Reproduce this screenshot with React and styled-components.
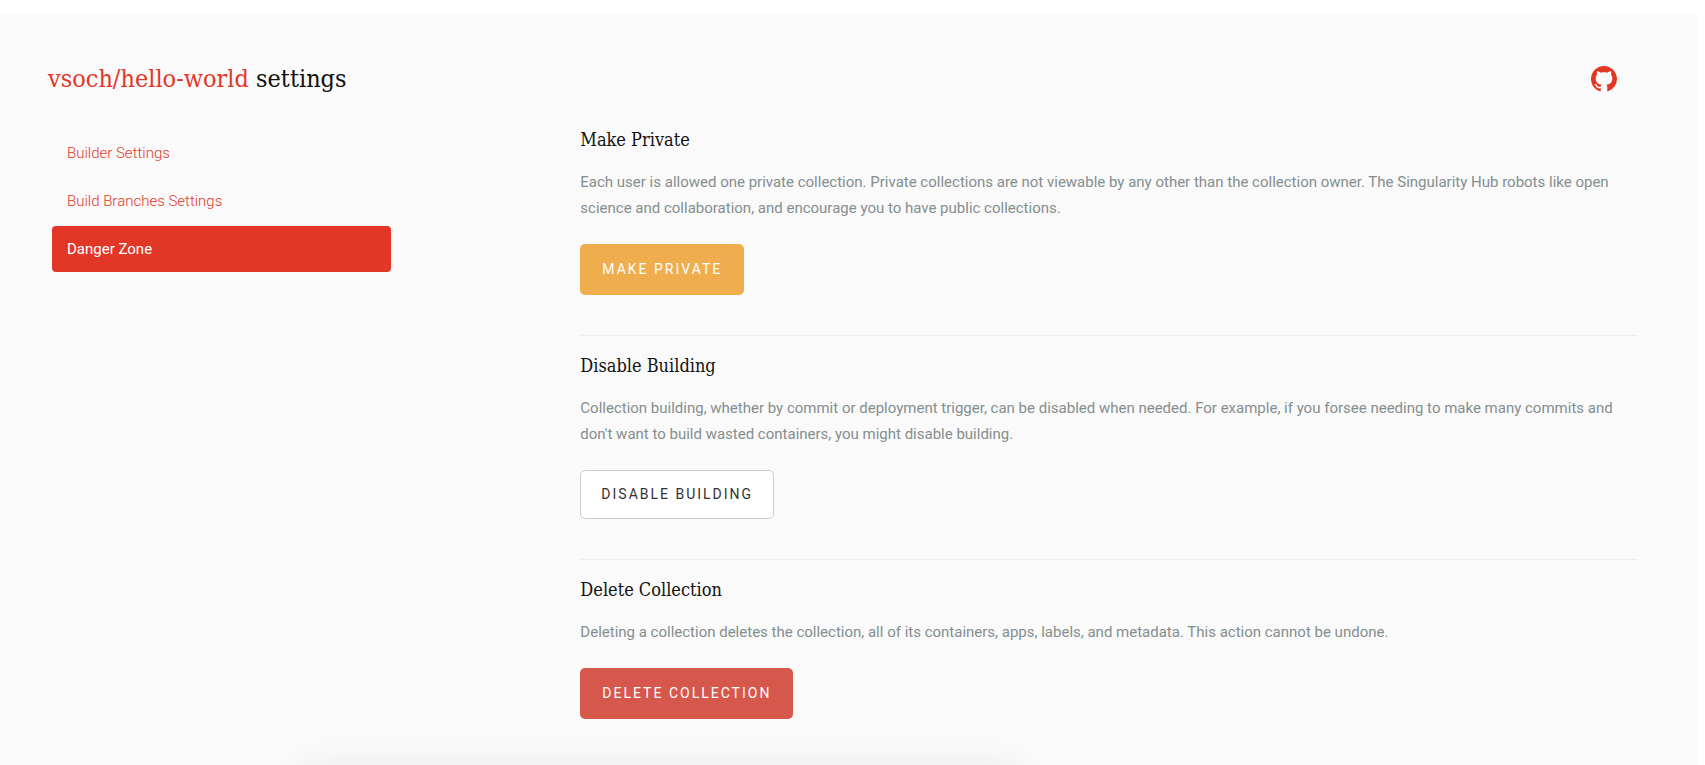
import React from "react";
import styled, { createGlobalStyle, css } from "styled-components";

const GlobalStyle = createGlobalStyle`
  *, *::before, *::after { box-sizing: border-box; }
  body {
    margin: 0;
    background: #fff;
    font-family: Roboto, "Liberation Sans", sans-serif;
    font-size: 15px;
    line-height: 26px;
    color: #848e8f;
  }
  h1, h2, p { margin: 0; }
`;

const slab = css`
  font-family: "Roboto Slab", "DejaVu Serif Condensed", "DejaVu Serif", serif;
  font-weight: 300;
  color: #111;
`;

const Page = styled.div`
  display: flex;
  min-height: 100vh;
  padding: 14px 8px 0 0;
`;

const Panel = styled.div`
  position: relative;
  flex: 1;
  min-width: 0;
  overflow: hidden;
  padding: 48px 60px 45px 48px;
  background: #fafafa;
`;

const Header = styled.header`
  display: flex;
  align-items: center;
  justify-content: space-between;
  height: 34px;
  margin-bottom: 32px;
  padding-right: 20px;
`;

const Title = styled.h1`
  ${slab}
  font-size: 25px;
  line-height: 32px;
`;

const TitleLink = styled.a`
  color: #e23727;
  text-decoration: none;
`;

const IconLink = styled.a`
  display: flex;
  color: #e23727;
`;

const Columns = styled.div`
  display: grid;
  grid-template-columns: minmax(0, 1fr) minmax(0, 2fr);
  gap: 4px;
`;

const Nav = styled.nav`
  display: flex;
  flex-direction: column;
  gap: 2px;
  width: 65%;
  padding: 2px 0 0 4px;
`;

const NavLink = styled.a`
  padding: 10px 15px;
  border-radius: 4px;
  font-weight: ${(p) => (p.$active ? 400 : 300)};
  color: ${(p) => (p.$active ? "#fff" : "#e23727")};
  background: ${(p) => (p.$active ? "#e23727" : "transparent")};
  text-decoration: none;
`;

const Section = styled.section`
  & + & {
    margin-top: 40px;
    padding-top: 18px;
    border-top: 1px solid #eee;
  }
`;

const SectionTitle = styled.h2`
  ${slab}
  margin-bottom: 17px;
  font-size: 18px;
  line-height: 24px;
`;

const variants = {
  warning: css`
    padding: 12px 22px 13px;
    border: 0;
    background: #f0ad4e;
    color: #fff;
  `,
  plain: css`
    padding: 10px 20px 11px;
    border: 1px solid #ccc;
    background: #fff;
    color: #333;
  `,
  danger: css`
    padding: 12px 22px 13px;
    border: 0;
    background: #d6574b;
    color: #fff;
  `,
};

const Button = styled.button`
  display: block;
  margin-top: 23px;
  border-radius: 5px;
  font-family: inherit;
  font-size: 14px;
  line-height: 26px;
  letter-spacing: 2px;
  text-transform: uppercase;
  cursor: pointer;
  ${(p) => variants[p.$variant]}
`;

const NoticeShadow = styled.div`
  position: absolute;
  top: 100%;
  left: 18%;
  width: 42%;
  height: 60px;
  box-shadow: 0 4px 36px 4px rgba(0, 0, 0, 0.06);
`;

const navItems = ["Builder Settings", "Build Branches Settings", "Danger Zone"];

const sections = [
  {
    title: "Make Private",
    text: "Each user is allowed one private collection. Private collections are not viewable by any other than the collection owner. The Singularity Hub robots like open science and collaboration, and encourage you to have public collections.",
    action: "Make Private",
    variant: "warning",
  },
  {
    title: "Disable Building",
    text: "Collection building, whether by commit or deployment trigger, can be disabled when needed. For example, if you forsee needing to make many commits and don't want to build wasted containers, you might disable building.",
    action: "Disable Building",
    variant: "plain",
  },
  {
    title: "Delete Collection",
    text: "Deleting a collection deletes the collection, all of its containers, apps, labels, and metadata. This action cannot be undone.",
    action: "Delete Collection",
    variant: "danger",
  },
];

const GithubIcon = () => (
  <svg width="26" height="26" viewBox="0 0 16 16" fill="currentColor" aria-hidden="true">
    <path d="M8 0C3.58 0 0 3.58 0 8c0 3.54 2.29 6.53 5.47 7.59.4.07.55-.17.55-.38 0-.19-.01-.82-.01-1.49-2.01.37-2.53-.49-2.69-.94-.09-.23-.48-.94-.82-1.13-.28-.15-.68-.52-.01-.53.63-.01 1.08.58 1.23.82.72 1.21 1.87.87 2.33.66.07-.52.28-.87.51-1.07-1.78-.2-3.64-.89-3.64-3.95 0-.87.31-1.59.82-2.15-.08-.2-.36-1.02.08-2.12 0 0 .67-.21 2.2.82.64-.18 1.32-.27 2-.27s1.36.09 2 .27c1.53-1.04 2.2-.82 2.2-.82.44 1.1.16 1.92.08 2.12.51.56.82 1.27.82 2.15 0 3.07-1.87 3.75-3.65 3.95.29.25.54.73.54 1.48 0 1.07-.01 1.93-.01 2.2 0 .21.15.46.55.38A8.01 8.01 0 0 0 16 8c0-4.42-3.58-8-8-8z" />
  </svg>
);

export default function App() {
  return (
    <Page>
      <GlobalStyle />
      <Panel>
        <Header>
          <Title>
            <TitleLink href="#collection">vsoch/hello-world</TitleLink> settings
          </Title>
          <IconLink href="#github" aria-label="GitHub">
            <GithubIcon />
          </IconLink>
        </Header>
        <Columns>
          <Nav>
            {navItems.map((item) => (
              <NavLink key={item} href="#settings" $active={item === "Danger Zone"}>
                {item}
              </NavLink>
            ))}
          </Nav>
          <main>
            {sections.map((s) => (
              <Section key={s.title}>
                <SectionTitle>{s.title}</SectionTitle>
                <p>{s.text}</p>
                <Button type="button" $variant={s.variant}>
                  {s.action}
                </Button>
              </Section>
            ))}
          </main>
        </Columns>
        <NoticeShadow />
      </Panel>
    </Page>
  );
}
